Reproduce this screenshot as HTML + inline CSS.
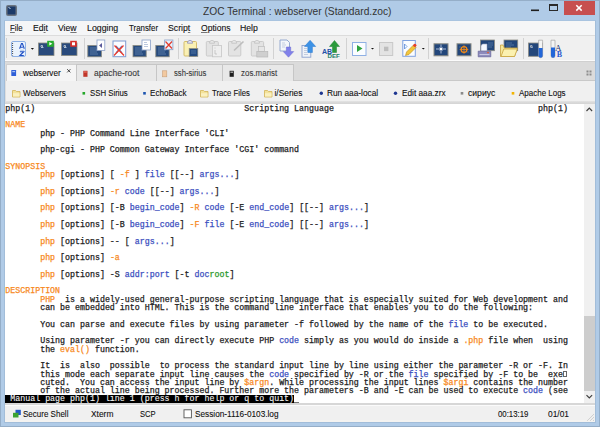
<!DOCTYPE html>
<html><head><meta charset="utf-8">
<style>
html,body{margin:0;padding:0;width:600px;height:427px;overflow:hidden;background:#b0cbe7;}
*{box-sizing:border-box;}
.a{position:absolute;}
.u{font-family:"Liberation Sans",sans-serif;white-space:pre;transform-origin:0 0;-webkit-text-stroke:0.1px currentColor;}
u{text-decoration-color:#777;}
#title{left:0;top:0;width:600px;height:21px;background:#b0cbe7;}
#client{left:5px;top:21px;width:590px;height:401px;background:#f0f0f0;}
#menubar{left:5px;top:21px;width:590px;height:15px;background:#f5f6f7;border-bottom:1px solid #dcdcdc;}
#toolbar{left:5px;top:36px;width:590px;height:25px;background:#f0f0f0;border-bottom:1px solid #fbfbfb;}
#tabbar{left:5px;top:61px;width:590px;height:20px;background:#dbdbdb;border-top:1px solid #d0d0d0;border-bottom:1px solid #c9c9c9;}
#bmbar{left:5px;top:81px;width:590px;height:23px;background:linear-gradient(#f0f0f0 0,#f0f0f0 20px,#e4e4e4 20px,#d6d6d6 22px,#d6d6d6 23px);}
#term{left:5px;top:104px;width:579px;height:299px;background:#ffffff;overflow:hidden;}
#sb{left:584px;top:104px;width:11px;height:299px;background:#f0f0f0;}
#status{left:5px;top:403px;width:590px;height:19px;background:linear-gradient(#d7d7d7 0,#d7d7d7 2px,#fbfbfb 2px,#fbfbfb 3px,#f0f0f0 3px,#f0f0f0 17px,#f4f3f1 17px);}
.tl{position:absolute;left:0;margin:0;font-family:"Liberation Mono",monospace;font-size:8.31px;line-height:9px;height:9px;color:#222;-webkit-text-stroke:0.25px currentColor;white-space:pre;}
.o{color:#f7891e;}
.b{color:#3c50c0;}
.g{color:#2c9a2c;}
.rv{color:#f4f4f4;-webkit-text-stroke:0.1px currentColor;}
.cur{display:inline-block;width:5px;height:1px;background:#333;vertical-align:-1px;}
.hy{display:inline-block;width:4px;height:6px;border:1px solid #666;vertical-align:0px;margin-left:0.5px;}
.tab{top:64px;height:17px;background:#e8e8e8;border:1px solid #c6c6c6;border-bottom:none;}
</style></head><body>
<div id="title" class="a"></div>
<div class="a" style="left:0;top:0;width:600px;height:427px;border:1px solid #95aec8;"></div>
<div class="a" style="left:4px;top:20px;width:592px;height:403px;border:1px solid #a2bdd9;border-top-color:#a9c4e0;"></div>
<div id="client" class="a"></div>
<div id="menubar" class="a"></div>
<div id="toolbar" class="a"></div>
<div id="tabbar" class="a"></div>
<div class="a" style="left:6px;top:64px;width:71px;height:18px;background:#f5f5f5;border:1px solid #d0d0d0;border-bottom:none;"></div>
<div class="a tab" style="left:76px;width:81px;"></div>
<div class="a tab" style="left:156px;width:67px;"></div>
<div class="a tab" style="left:222px;width:72px;"></div>
<div id="bmbar" class="a"></div>
<div class="a" style="left:5px;top:64px;width:1px;height:38px;background:#dedede;"></div>
<div id="term" class="a">
<div class="tl" style="top:-0.40px;left:0.3px">php(1)                                          Scripting Language                                         php(1)</div>
<div class="tl" style="top:16.22px;left:0.3px"><span class="o">NAME</span></div>
<div class="tl" style="top:24.53px;left:0.3px">       php - PHP Command Line Interface &#x27;CLI&#x27;</div>
<div class="tl" style="top:41.15px;left:0.3px">       php-cgi - PHP Common Gateway Interface &#x27;CGI&#x27; command</div>
<div class="tl" style="top:57.77px;left:0.3px"><span class="o">SYNOPSIS</span></div>
<div class="tl" style="top:66.08px;left:0.3px">       <span class="o">php</span> [options] [ <span class="o">-f</span> ] <span class="b">file</span> [[--] <span class="b">args...</span>]</div>
<div class="tl" style="top:82.70px;left:0.3px">       <span class="o">php</span> [options] <span class="o">-r</span> <span class="b">code</span> [[--] <span class="b">args...</span>]</div>
<div class="tl" style="top:99.32px;left:0.3px">       <span class="o">php</span> [options] [-B <span class="b">begin_code</span>] <span class="o">-R</span> <span class="b">code</span> [-E <span class="b">end_code</span>] [[--] <span class="b">args...</span>]</div>
<div class="tl" style="top:115.94px;left:0.3px">       <span class="o">php</span> [options] [-B <span class="b">begin_code</span>] <span class="o">-F</span> <span class="b">file</span> [-E <span class="b">end_code</span>] [[--] <span class="b">args...</span>]</div>
<div class="tl" style="top:132.56px;left:0.3px">       <span class="o">php</span> [options] -- [ <span class="b">args...</span>]</div>
<div class="tl" style="top:149.18px;left:0.3px">       <span class="o">php</span> [options] <span class="o">-a</span></div>
<div class="tl" style="top:165.80px;left:0.3px">       <span class="o">php</span> [options] -S <span class="b">addr:port</span> [-t <span class="b">doc</span><span class="g">root</span>]</div>
<div class="tl" style="top:182.42px;left:0.3px"><span class="o">DESCRIPTION</span></div>
<div class="tl" style="top:190.73px;left:0.3px">       <span class="o">PHP</span>  is a widely-used general-purpose scripting language that is especially suited for Web development and</div>
<div class="tl" style="top:199.04px;left:0.3px">       can be embedded into HTML. This is the command line interface that enables you to do the following:</div>
<div class="tl" style="top:215.66px;left:0.3px">       You can parse and execute files by using parameter -f followed by the name of the <span class="b">file</span> to be executed.</div>
<div class="tl" style="top:232.28px;left:0.3px">       Using parameter -r you can directly execute PHP <span class="b">code</span> simply as you would do inside a <span class="o">.php</span> file when  using</div>
<div class="tl" style="top:240.59px;left:0.3px">       the <span class="o">eval()</span> function.</div>
<div class="tl" style="top:257.21px;left:0.3px">       It  is  also  possible  to process the standard input line by line using either the parameter -R or -F. In</div>
<div class="tl" style="top:265.52px;left:0.3px">       this mode each separate input line causes the <span class="b">code</span> specified by -R or the <span class="b">file</span> specified by -F to be  exe<span class="hy"></span></div>
<div class="tl" style="top:273.83px;left:0.3px">       cuted.  You can access the input line by <span class="o">$argn</span>. While processing the input lines <span class="o">$argi</span> contains the number</div>
<div class="tl" style="top:282.14px;left:0.3px">       of the actual line being processed. Further more the parameters -B and -E can be used to execute <span class="b">code</span> (see</div>
<div class="a" style="left:0;top:291px;width:289px;height:8px;background:#000;"></div>
<div class="a" style="left:289px;top:298px;width:5px;height:1px;background:#777;"></div>
<div class="tl" style="top:290.45px;left:0.3px"><span class="rv"> Manual page php(1) line 1 (press h for help or q to quit)</span></div>
</div>
<div id="sb" class="a"></div>
<div class="a" style="left:584px;top:316px;width:11px;height:75px;background:#cdcdcd;"></div>
<div id="status" class="a"></div>

<svg class="a" style="left:0;top:0" width="600" height="427" viewBox="0 0 600 427">
<!-- title icon -->
<rect x="6" y="5" width="11" height="11" rx="2" fill="#6c7580"/>
<rect x="7.5" y="6.5" width="8" height="8" fill="#1c3a68"/>
<path d="M8.5 7.5l2 1" stroke="#cfe0f0" stroke-width="1"/>
<!-- window controls -->
<rect x="531" y="9.5" width="8" height="1.6" fill="#1e1e1e"/>
<rect x="549.5" y="4.5" width="8" height="6" fill="none" stroke="#2a2a2a" stroke-width="1"/>
<rect x="549.5" y="4" width="8" height="2" fill="#2a2a2a"/>
<rect x="564" y="1" width="31" height="14" fill="#c74f4f"/>
<path d="M576.3 5.2L581.7 10.6M581.7 5.2L576.3 10.6" stroke="#fff" stroke-width="1.5"/>

<!-- toolbar grip -->
<rect x="6" y="38" width="1" height="20" fill="#cfcfcf"/>
<!-- separators -->
<g fill="#d2d2d2">
<rect x="84" y="38" width="1" height="21"/><rect x="178" y="38" width="1" height="21"/>
<rect x="273" y="38" width="1" height="21"/><rect x="346" y="38" width="1" height="21"/>
<rect x="428" y="38" width="1" height="21"/><rect x="523" y="38" width="1" height="21"/>
</g>
<!-- icon1 A-Z -->
<rect x="11.5" y="41.5" width="14" height="15" rx="1.5" fill="#eaf3fd" stroke="#8fb1e4" stroke-width="1"/>
<path d="M12.6 43v12.5" stroke="#4a4a4a" stroke-width="1" stroke-dasharray="1 1"/>
<path d="M19.6 48.8l1.9-5.3h.9l1.9 5.3M20.3 47.2h2.6" fill="none" stroke="#1f4fc4" stroke-width="1.1"/>
<path d="M20.2 50.3h4" stroke="#9bb3dc" stroke-width=".7"/>
<path d="M19.9 51.7h3.8l-3.8 3.8h3.9" fill="none" stroke="#1f4fc4" stroke-width="1.1"/>
<path d="M30.8 48h3.2l-1.6 1.8z" fill="#111"/>
<!-- icon2 term + green -->
<rect x="38.5" y="43" width="15.5" height="12.5" fill="#294a7c" stroke="#8a8a80" stroke-width=".8"/>
<path d="M41 45.5h1.5v1.5H41zM41 47.5h2.5" stroke="#c8d8ea" stroke-width=".8"/>
<rect x="47.2" y="40.8" width="6.6" height="6" fill="#26ad2e"/>
<path d="M49.3 42l3 1.8-3 1.8z" fill="#fff"/>
<!-- icon3 term + red -->
<rect x="61.5" y="43" width="15.5" height="12.5" fill="#294a7c" stroke="#8a8a80" stroke-width=".8"/>
<path d="M64 45.5h1.5v1.5H64zM64 47.5h2.5" stroke="#c8d8ea" stroke-width=".8"/>
<rect x="70.2" y="40.8" width="6.6" height="6" fill="#d8302a"/>
<rect x="72" y="42.3" width="3" height="3" fill="#fff"/>
<!-- icon4 -->
<rect x="87.8" y="45.5" width="13.7" height="11.3" fill="#274b7e" stroke="#8a8a80" stroke-width=".8"/>
<path d="M90 48h6M90 50h8M90 52h7M90 54h8" stroke="#6d8fb8" stroke-width=".7"/>
<rect x="97" y="40" width="7.8" height="10.5" fill="#fff" stroke="#8aa0c8" stroke-width=".8"/>
<path d="M102 43l-3 2.5 3 2.5z" fill="#5a5a9a"/>
<!-- icon5 -->
<rect x="113" y="41" width="12.7" height="15.7" fill="#fbfcff" stroke="#7d9ad0" stroke-width="1"/>
<path d="M116 46l6 7M122 46l-6 7" stroke="#5a80c8" stroke-width="1.2"/>
<path d="M114.5 45.5l9.5 10M123.5 45.5l-9.5 10" stroke="#e8382a" stroke-width="1.3"/>
<!-- icon6 -->
<rect x="133" y="45.5" width="13.2" height="11.3" fill="#274b7e" stroke="#8a8a80" stroke-width=".8"/>
<path d="M135 48h6M135 50h8M135 52h7M135 54h8" stroke="#6d8fb8" stroke-width=".7"/>
<rect x="142" y="40" width="8.4" height="10" fill="#fff" stroke="#8aa0c8" stroke-width=".8"/>
<path d="M144 42.5h3M144 44.5h4M144 46.5h4" stroke="#9db0d0" stroke-width=".7"/>
<!-- icon7 -->
<rect x="155.8" y="45.5" width="13.4" height="11.3" fill="#274b7e" stroke="#8a8a80" stroke-width=".8"/>
<path d="M158 48h6M158 50h8M158 52h7M158 54h8" stroke="#6d8fb8" stroke-width=".7"/>
<rect x="164.6" y="40" width="8.3" height="9.7" fill="#e8f2fd" stroke="#8aa0c8" stroke-width=".8"/>
<path d="M165.5 41.5l6.5 7M172 41.5l-6.5 7" stroke="#e23a2a" stroke-width="1.2"/>
<!-- icon8 clipboard -->
<rect x="184" y="41.5" width="12.5" height="14.5" rx="1" fill="#faf0b4" stroke="#d4bc6c" stroke-width="1"/>
<path d="M187.5 43.2c0-2 1-2.7 2.5-2.7s2.5.7 2.5 2.7z" fill="#e8e8f0" stroke="#8a8ab8" stroke-width=".8"/>
<rect x="189.2" y="48.6" width="8.6" height="7.8" fill="#234a80" stroke="#8a8a80" stroke-width=".7"/>
<path d="M191 51h5M191 53h5" stroke="#6d8fb8" stroke-width=".6"/>
<!-- icon9 gray -->
<g opacity="1">
<rect x="206.3" y="41.5" width="12" height="14.5" rx="1" fill="#e3e3e3" stroke="#cbcbcb" stroke-width="1"/>
<path d="M209.5 43.2c0-2 1-2.7 2.5-2.7s2.5.7 2.5 2.7z" fill="#e8e8e8" stroke="#c0c0c0" stroke-width=".8"/>
<rect x="212.5" y="45.5" width="9" height="11.3" fill="#eeeeee" stroke="#c6c6c6" stroke-width=".8"/>
<path d="M214.5 48h1M215 50v4h2" stroke="#b8b8b8" stroke-width=".7" fill="none"/>
<!-- icon10 -->
<rect x="228.5" y="41.5" width="12.3" height="14.5" rx="1" fill="#e3e3e3" stroke="#cbcbcb" stroke-width="1"/>
<path d="M231.7 43.2c0-2 1-2.7 2.5-2.7s2.5.7 2.5 2.7z" fill="#e8e8e8" stroke="#c0c0c0" stroke-width=".8"/>
<path d="M234 50.5l9.5-9" stroke="#bdbdbd" stroke-width="1.6"/>
<!-- icon11 -->
<rect x="251.3" y="41.5" width="12.3" height="14.5" rx="1" fill="#e3e3e3" stroke="#cbcbcb" stroke-width="1"/>
<path d="M254.5 43.2c0-2 1-2.7 2.5-2.7s2.5.7 2.5 2.7z" fill="#e8e8e8" stroke="#c0c0c0" stroke-width=".8"/>
<rect x="258.5" y="46.5" width="6" height="5" fill="#e6e6e6" stroke="#bcbcbc" stroke-width=".7"/>
<rect x="256.8" y="51.5" width="11" height="5.5" fill="#cfcfcf" stroke="#b8b8b8" stroke-width=".7"/>
</g>
<!-- icon12 doc + purple down -->
<path d="M280 40h7l2.5 2.5v8.5h-9.5z" fill="#f4f6fa" stroke="#8aa0cc" stroke-width=".9"/>
<path d="M282 43h3M282 45h4M282 47h3" stroke="#b0bcd4" stroke-width=".7"/>
<path d="M286.3 47h4.4v4.6h3l-5.2 5.6-5.2-5.6h3z" fill="#8080ea" stroke="#6a6ad0" stroke-width=".5"/>
<!-- icon13 doc + blue up -->
<rect x="302" y="45.5" width="8.8" height="11.7" fill="#f0f3f8" stroke="#8aa0cc" stroke-width=".9"/>
<path d="M304 48.5h3M304 50.5h3M304 52.5h3M304 54.5h4" stroke="#b0bcd4" stroke-width=".7"/>
<path d="M307.8 52.5v-6h-3.3l5.6-6.2 5.6 6.2h-3.3v6z" fill="#3d92e6" stroke="#2a78cc" stroke-width=".5"/>
<!-- icon14 ABC DEF -->
<path d="M332.5 52.5v-6h-3l5-6 5 6h-3v6z" fill="#2a9a3a" stroke="#1e8030" stroke-width=".5"/>
<text x="322" y="53.5" font-family="Liberation Sans" font-size="7" font-weight="bold" fill="#2450a8">AB</text>
<text x="327.5" y="57.8" font-family="Liberation Sans" font-size="6.2" font-weight="bold" fill="#24806a">DEF</text>
<!-- icon15 play -->
<rect x="352.5" y="42.5" width="13.5" height="13" fill="#fbfdff" stroke="#8fb0e4" stroke-width="1"/>
<path d="M357 45l5.5 3.5-5.5 3.5z" fill="#2ea23e"/>
<path d="M371 48h3l-1.5 1.6z" fill="#111"/>
<!-- icon16 stop gray -->
<rect x="379.5" y="42.5" width="13.2" height="13" fill="#e3e3e3" stroke="#c9c9c9" stroke-width="1"/>
<rect x="384" y="46.7" width="4.4" height="4.4" fill="#bdbdbd"/>
<!-- icon17 doc pencil -->
<rect x="402.8" y="40.5" width="12.5" height="15.8" fill="#fbfdff" stroke="#7fa2e0" stroke-width="1"/>
<path d="M404.5 44v5l2.5-2.5z" fill="none" stroke="#5a8ad8" stroke-width=".8"/>
<path d="M405.5 55.5l1-3.5 7-7 2.5 2.5-7 7z" fill="#f2c63a" stroke="#b88a20" stroke-width=".6"/>
<circle cx="414.8" cy="45.3" r="1.6" fill="#e8402a"/>
<path d="M421.8 48h3l-1.5 1.6z" fill="#111"/>
<!-- icon18 star -->
<rect x="434" y="43.8" width="14" height="12" fill="#22467a" stroke="#8c8c84" stroke-width="1"/>
<path d="M441 44.5v9M436 49h10" stroke="#e6eefc" stroke-width=".7"/>
<path d="M439.3 47.3l3.4 3.4M442.7 47.3l-3.4 3.4" stroke="#b8cbea" stroke-width=".6"/>
<circle cx="441" cy="49" r="1.3" fill="#fff"/>
<!-- icon19 target -->
<rect x="457" y="43.8" width="14" height="12" fill="#22467a" stroke="#8c8c84" stroke-width="1"/>
<circle cx="464" cy="49.5" r="2.9" fill="none" stroke="#f08a1a" stroke-width="1.3"/>
<path d="M464 45.2v8.6M459.7 49.5h8.6" stroke="#f08a1a" stroke-width=".8"/>
<path d="M459 47h2M467 52h2" stroke="#5d7fac" stroke-width=".6"/>
<!-- icon20 printer -->
<rect x="480.5" y="40" width="14" height="10.7" fill="#22467a" stroke="#8c8c84" stroke-width=".8"/>
<path d="M488 43h5M488 45h5M488 47h4" stroke="#6d8fb8" stroke-width=".6"/>
<path d="M481 51v-5.5l1.5-1.5h4.5v7z" fill="#f4f8ff" stroke="#9aa4c0" stroke-width=".6"/>
<path d="M478.2 51.2h12.6v5.6h-12.6z" fill="#8c8abc" stroke="#66649a" stroke-width=".7"/>
<path d="M479.5 54.6h10" stroke="#d6d6ee" stroke-width=".9"/>
<rect x="487" y="52.2" width="2" height="1" fill="#e8602a"/>
<!-- icon21 folder -->
<rect x="504" y="40" width="13.7" height="10.7" fill="#22467a" stroke="#8c8c84" stroke-width=".8"/>
<path d="M506 43h6M506 45h8M506 47h5" stroke="#6d8fb8" stroke-width=".6"/>
<path d="M500.5 45v11.5h14l2.8-8.5h-13l-1.3-3z" fill="#f6e79a" stroke="#c9a440" stroke-width=".8"/>
<path d="M501 56.5l2.8-7.5h13.5l-2.8 7.5z" fill="#fbf1b0" stroke="#c9a440" stroke-width=".8"/>
<!-- icon22 term + tube -->
<rect x="528.5" y="43" width="14" height="13.3" fill="#22467a" stroke="#8c8c84" stroke-width=".8"/>
<path d="M530.5 45.5h1.5v1.5h-1.5zM530.5 47.3h2.5" stroke="#c8d8ea" stroke-width=".7"/>
<path d="M538.6 40.2h4v15.5a2 2 0 0 1-4 0z" fill="#f4f4f4" stroke="#999" stroke-width=".6"/>
<path d="M538.6 48h4v7.7a2 2 0 0 1-4 0z" fill="#2266d8"/>
<!-- icon23 tube + AB -->
<path d="M551 40.2h4v15.5a2 2 0 0 1-4 0z" fill="#f4f4f4" stroke="#999" stroke-width=".6"/>
<path d="M551 47.5h4v8.2a2 2 0 0 1-4 0z" fill="#2266d8"/>
<text x="555" y="50.5" font-family="Liberation Serif" font-size="9" fill="#24306a">A</text>
<text x="556.8" y="56.8" font-family="Liberation Serif" font-size="8" font-weight="bold" fill="#2a5ad0">B</text>

<!-- tabs icons -->
<rect x="11.3" y="70" width="4.8" height="6" rx=".5" fill="#2f5fd8"/>
<rect x="12.3" y="71" width="2.8" height="1.2" fill="#a8c4f4"/>
<path d="M67.2 69.2l3.2 3.2M70.4 69.2l-3.2 3.2" stroke="#333" stroke-width=".9"/>
<rect x="83.3" y="70.8" width="4.2" height="6" fill="#c0362a"/>
<rect x="84" y="71.5" width="2.8" height="1" fill="#f08070"/>
<rect x="162.6" y="70.8" width="4.2" height="6" fill="#f2c9a0" stroke="#caa07a" stroke-width=".6"/>
<rect x="229.6" y="70.8" width="4.2" height="6" fill="#1e1e1e"/>
<rect x="230.4" y="71.6" width="2.6" height="1.2" fill="#bbb"/>
<!-- tab bar grip -->
<g fill="#8c8c8c"><rect x="586.5" y="70.5" width="2" height="2"/><rect x="589.5" y="70.5" width="2" height="2"/><rect x="586.5" y="73.5" width="2" height="2"/><rect x="589.5" y="73.5" width="2" height="2"/></g>

<!-- bookmark icons -->
<path d="M12.5 90.5h3l1 1h3.5v5.5h-7.5z" fill="#f3e29a" stroke="#d2b257" stroke-width=".8"/><path d="M13 93.2h6.5v3.3h-6.5z" fill="#faf0c0"/>
<path d="M200.5 90.5h3l1 1h3.5v5.5h-7.5z" fill="#f3e29a" stroke="#d2b257" stroke-width=".8"/><path d="M201 93.2h6.5v3.3h-6.5z" fill="#faf0c0"/>
<path d="M264.5 90.5h3l1 1h3.5v5.5h-7.5z" fill="#f3e29a" stroke="#d2b257" stroke-width=".8"/><path d="M265 93.2h6.5v3.3h-6.5z" fill="#faf0c0"/>
<rect x="82.5" y="92" width="2.6" height="2.6" fill="#25a82a"/>
<rect x="143.2" y="92" width="2.6" height="2.6" fill="#1d55b0"/>
<circle cx="321.3" cy="93.2" r="1.7" fill="#1d3590"/>
<circle cx="395.5" cy="93.2" r="1.7" fill="#1d3590"/>
<rect x="460.7" y="92" width="2.6" height="2.6" fill="#8a8a8a"/>
<rect x="511.7" y="92" width="2.6" height="2.6" fill="#f2b400"/>

<!-- scrollbar arrows -->
<path d="M586.5 111l2.8-2.8 2.8 2.8" fill="none" stroke="#404040" stroke-width="1.2"/>
<path d="M586.5 395.2l2.8 2.8 2.8-2.8" fill="none" stroke="#404040" stroke-width="1.2"/>
<!-- status icons -->
<rect x="15.5" y="409.8" width="5.3" height="5.2" fill="#2458c8"/>
<rect x="13" y="412.8" width="5.5" height="4.7" fill="#3ca232"/>
<rect x="184" y="409.8" width="7.4" height="8" fill="#fff" stroke="#555" stroke-width=".9"/>
<path d="M594 414l-7 7M594 417l-4 4M594 420l-1 1" stroke="#c4c4c4" stroke-width="1" stroke-dasharray="1 .5"/>
</svg>
<div class="a u" style="left:203.00px;top:5.80px;font-size:10.5px;line-height:10.5px;color:#333333;-webkit-text-stroke:0;transform:scaleX(0.974)">ZOC Terminal : webserver (Standard.zoc)</div>
<div class="a u" style="left:9.60px;top:24.90px;font-size:8.2px;line-height:8.2px;color:#101010;transform:scaleX(0.954)"><u>F</u>ile</div>
<div class="a u" style="left:32.69px;top:24.90px;font-size:8.2px;line-height:8.2px;color:#101010;transform:scaleX(1.058)">Ed<u>i</u>t</div>
<div class="a u" style="left:58.00px;top:24.90px;font-size:8.2px;line-height:8.2px;color:#101010;transform:scaleX(1.056)">Vie<u>w</u></div>
<div class="a u" style="left:86.93px;top:24.90px;font-size:8.2px;line-height:8.2px;color:#101010;transform:scaleX(1.071)">Logging</div>
<div class="a u" style="left:129.20px;top:24.90px;font-size:8.2px;line-height:8.2px;color:#101010;transform:scaleX(0.960)">Tr<u>a</u>nsfer</div>
<div class="a u" style="left:167.63px;top:24.90px;font-size:8.2px;line-height:8.2px;color:#101010;transform:scaleX(1.065)">Scrip<u>t</u></div>
<div class="a u" style="left:200.70px;top:24.90px;font-size:8.2px;line-height:8.2px;color:#101010;transform:scaleX(1.046)"><u>O</u>ptions</div>
<div class="a u" style="left:239.94px;top:24.90px;font-size:8.2px;line-height:8.2px;color:#101010;transform:scaleX(1.062)">Help</div>
<div class="a u" style="left:22.50px;top:68.50px;font-size:8.5px;line-height:8.5px;color:#101010;transform:scaleX(0.962)">webserver</div>
<div class="a u" style="left:94.00px;top:68.50px;font-size:8.5px;line-height:8.5px;color:#3a3a3a;transform:scaleX(1.000)">apache-root</div>
<div class="a u" style="left:173.80px;top:68.50px;font-size:8.5px;line-height:8.5px;color:#3a3a3a;transform:scaleX(0.903)">ssh-sirius</div>
<div class="a u" style="left:240.50px;top:68.50px;font-size:8.5px;line-height:8.5px;color:#3a3a3a;transform:scaleX(0.936)">zos.marist</div>
<div class="a u" style="left:23.20px;top:89.00px;font-size:8.4px;line-height:8.4px;color:#101010;transform:scaleX(0.961)">Webservers</div>
<div class="a u" style="left:89.87px;top:89.00px;font-size:8.4px;line-height:8.4px;color:#101010;transform:scaleX(0.933)">SSH Sirius</div>
<div class="a u" style="left:149.53px;top:89.00px;font-size:8.4px;line-height:8.4px;color:#101010;transform:scaleX(0.968)">EchoBack</div>
<div class="a u" style="left:211.80px;top:89.00px;font-size:8.4px;line-height:8.4px;color:#101010;transform:scaleX(0.920)">Trace Files</div>
<div class="a u" style="left:274.50px;top:89.00px;font-size:8.4px;line-height:8.4px;color:#101010;transform:scaleX(1.000)">i/Series</div>
<div class="a u" style="left:326.51px;top:89.00px;font-size:8.4px;line-height:8.4px;color:#101010;transform:scaleX(0.990)">Run aaa-local</div>
<div class="a u" style="left:401.72px;top:89.00px;font-size:8.4px;line-height:8.4px;color:#101010;transform:scaleX(0.984)">Edit aaa.zrx</div>
<div class="a u" style="left:468.30px;top:89.00px;font-size:8.4px;line-height:8.4px;color:#101010;transform:scaleX(1.027)">сириус</div>
<div class="a u" style="left:519.00px;top:89.00px;font-size:8.4px;line-height:8.4px;color:#101010;transform:scaleX(0.953)">Apache Logs</div>
<div class="a u" style="left:23.07px;top:409.50px;font-size:8.6px;line-height:8.6px;color:#101010;transform:scaleX(0.932)">Secure Shell</div>
<div class="a u" style="left:90.50px;top:409.50px;font-size:8.6px;line-height:8.6px;color:#101010;transform:scaleX(0.978)">Xterm</div>
<div class="a u" style="left:140.41px;top:409.50px;font-size:8.6px;line-height:8.6px;color:#101010;transform:scaleX(0.887)">SCP</div>
<div class="a u" style="left:195.34px;top:409.50px;font-size:8.6px;line-height:8.6px;color:#101010;transform:scaleX(0.959)">Session-1116-0103.log</div>
<div class="a u" style="left:497.50px;top:409.50px;font-size:8.6px;line-height:8.6px;color:#101010;transform:scaleX(0.909)">00:13:19</div>
<div class="a u" style="left:548.30px;top:409.50px;font-size:8.6px;line-height:8.6px;color:#101010;transform:scaleX(0.976)">01/01</div>
</body></html>
